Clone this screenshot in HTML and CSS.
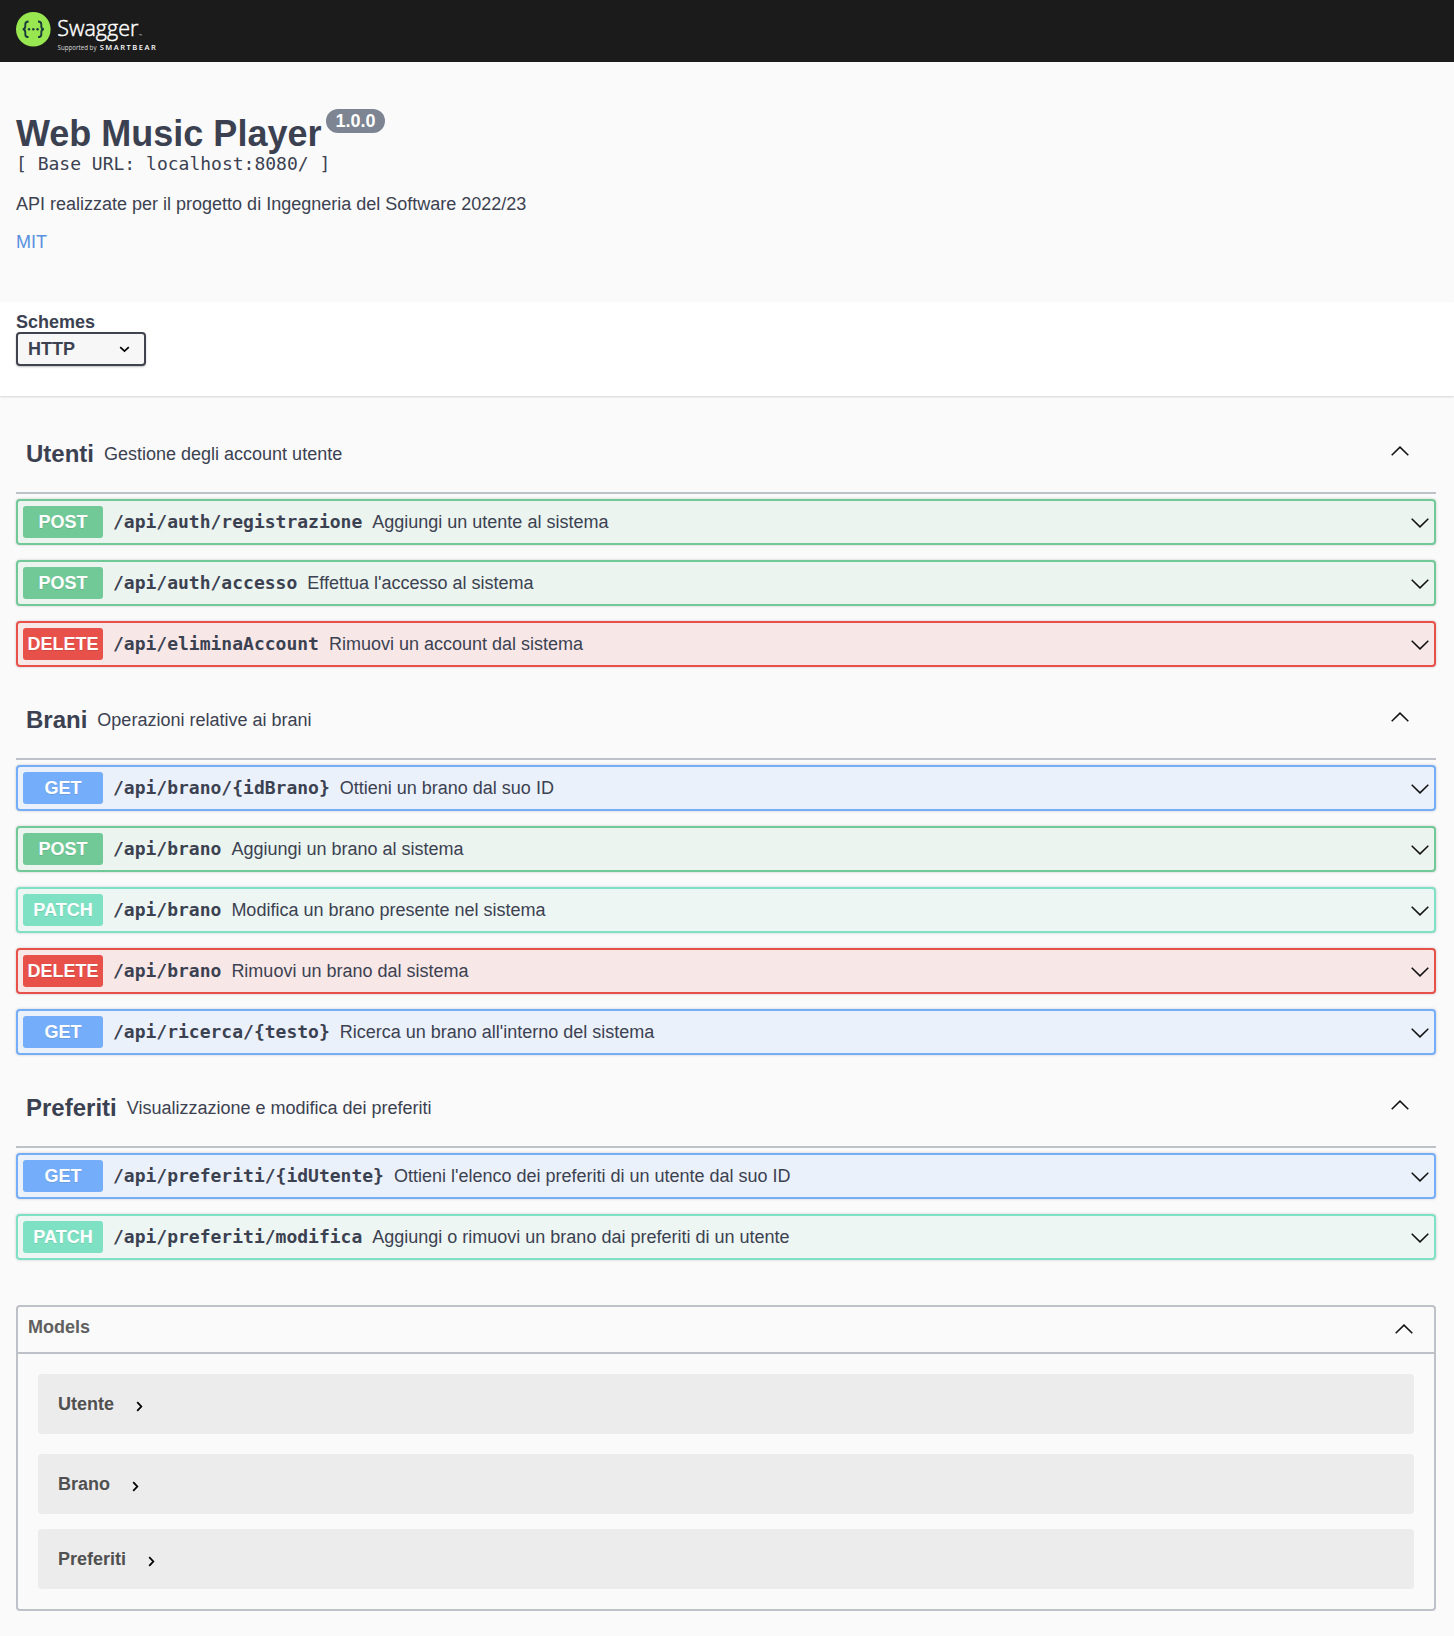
FILE: index.html
```html
<!DOCTYPE html>
<html lang="it">
<head>
<meta charset="utf-8">
<title>Swagger UI</title>
<link rel="stylesheet" href="styles.css">
</head>
<body>
<svg class="defs" aria-hidden="true">
  <symbol id="up" viewBox="0 0 18 10"><path d="M.7 9.2 9 1.1l8.300 8.100"/></symbol>
  <symbol id="down" viewBox="0 0 18 10"><path d="M.7.8 9 8.900 17.300.8"/></symbol>
  <symbol id="right" viewBox="0 0 7 11"><path d="M1.200 1.200 5.300 5.500 1.200 9.800"/></symbol>
</svg>
<header class="topbar">
  <svg class="logo" width="160" height="62" viewBox="0 0 160 62">
    <circle cx="33.300" cy="29.300" r="17.300" fill="#98e750"/>
    <g fill="none" stroke="#1c3a3c" stroke-width="1.900">
      <path d="M28.600 21.500c-2.600 0-3.300.8-3.300 2.700v2.100c0 2-.7 2.900-2.600 3 1.900.1 2.600 1 2.600 3v2.100c0 1.900.7 2.700 3.300 2.700"/>
      <path d="M38 21.500c2.600 0 3.300.8 3.300 2.700v2.100c0 2 .7 2.900 2.600 3-1.900.1-2.600 1-2.600 3v2.100c0 1.900-.7 2.700-3.300 2.700"/>
    </g>
    <g fill="#1c3a3c"><circle cx="29" cy="29.300" r="1.200"/><circle cx="33.300" cy="29.300" r="1.200"/><circle cx="37.600" cy="29.300" r="1.200"/></g>
    <text class="brand" x="57.300" y="36.300" textLength="81" lengthAdjust="spacingAndGlyphs">Swagger</text>
    <text class="tm" x="139" y="37">™</text>
    <text class="support" x="57.500" y="50.300" textLength="39" lengthAdjust="spacingAndGlyphs">Supported by</text>
    <text class="bear" x="99.700" y="50.300" textLength="56">SMARTBEAR</text>
  </svg>
</header>

<section class="info">
  <h1 class="title">Web Music Player<span class="version">1.0.0</span></h1>
  <p class="base-url">[ Base URL: localhost:8080/ ]</p>
  <p class="about">API realizzate per il progetto di Ingegneria del Software 2022/23</p>
  <a class="license">MIT</a>
</section>

<section class="schemes">
  <span class="schemes-label">Schemes</span>
  <div class="select">HTTP<svg class="select-arrow" viewBox="0 0 11 7"><path d="M1.200 1.200 5.500 5.200 9.800 1.200"/></svg></div>
</section>

<main class="content">
  <section class="tag">
    <header class="tag-head"><h2>Utenti</h2><p>Gestione degli account utente</p><svg class="arrow"><use href="#up"/></svg></header>
    <div class="op post"><span class="method">POST</span><code>/api/auth/registrazione</code><p>Aggiungi un utente al sistema</p><svg class="arrow"><use href="#down"/></svg></div>
    <div class="op post"><span class="method">POST</span><code>/api/auth/accesso</code><p>Effettua l'accesso al sistema</p><svg class="arrow"><use href="#down"/></svg></div>
    <div class="op delete"><span class="method">DELETE</span><code>/api/eliminaAccount</code><p>Rimuovi un account dal sistema</p><svg class="arrow"><use href="#down"/></svg></div>
  </section>
  <section class="tag">
    <header class="tag-head"><h2>Brani</h2><p>Operazioni relative ai brani</p><svg class="arrow"><use href="#up"/></svg></header>
    <div class="op get"><span class="method">GET</span><code>/api/brano/{idBrano}</code><p>Ottieni un brano dal suo ID</p><svg class="arrow"><use href="#down"/></svg></div>
    <div class="op post"><span class="method">POST</span><code>/api/brano</code><p>Aggiungi un brano al sistema</p><svg class="arrow"><use href="#down"/></svg></div>
    <div class="op patch"><span class="method">PATCH</span><code>/api/brano</code><p>Modifica un brano presente nel sistema</p><svg class="arrow"><use href="#down"/></svg></div>
    <div class="op delete"><span class="method">DELETE</span><code>/api/brano</code><p>Rimuovi un brano dal sistema</p><svg class="arrow"><use href="#down"/></svg></div>
    <div class="op get"><span class="method">GET</span><code>/api/ricerca/{testo}</code><p>Ricerca un brano all'interno del sistema</p><svg class="arrow"><use href="#down"/></svg></div>
  </section>
  <section class="tag">
    <header class="tag-head"><h2>Preferiti</h2><p>Visualizzazione e modifica dei preferiti</p><svg class="arrow"><use href="#up"/></svg></header>
    <div class="op get"><span class="method">GET</span><code>/api/preferiti/{idUtente}</code><p>Ottieni l'elenco dei preferiti di un utente dal suo ID</p><svg class="arrow"><use href="#down"/></svg></div>
    <div class="op patch"><span class="method">PATCH</span><code>/api/preferiti/modifica</code><p>Aggiungi o rimuovi un brano dai preferiti di un utente</p><svg class="arrow"><use href="#down"/></svg></div>
  </section>

  <section class="models">
    <header class="models-head"><h3>Models</h3><svg class="arrow"><use href="#up"/></svg></header>
    <div class="models-list">
      <div class="model">Utente<svg class="more"><use href="#right"/></svg></div>
      <div class="model">Brano<svg class="more"><use href="#right"/></svg></div>
      <div class="model">Preferiti<svg class="more"><use href="#right"/></svg></div>
    </div>
  </section>
</main>
</body>
</html>
```
FILE: styles.css
```css
* { box-sizing: border-box; }
body {
  margin: 0;
  min-height: 1636px;
  background: #fafafa;
  color: #3b4151;
  font: 18px/20px "Liberation Sans", Arial, sans-serif;
}
h1, h2, h3, p { margin: 0; }
svg { display: block; fill: none; }
.defs { display: none; }

.topbar { height: 62px; background: #1b1b1b; }
.brand { font: 300 22px "Open Sans", sans-serif; fill: #fff; stroke: #fff; stroke-width: .45px; }
.tm { font: 4px "Open Sans", sans-serif; fill: #ccc; }
.support { font: 6.5px "Open Sans", sans-serif; fill: #ddd; }
.bear { font: 600 7.500px "Open Sans", sans-serif; fill: #fff; }

.info { height: 240px; padding: 51px 16px 0; }
.title { display: flex; height: 41px; font-size: 36px; line-height: 41px; white-space: pre; }
.version {
  width: 59px;
  height: 24px;
  margin: -4px 0 0 5px;
  padding-right: 1px;
  border-radius: 12px;
  background: #7d8492;
  color: #fff;
  font-size: 18px;
  line-height: 24px;
  text-align: center;
}
.base-url { font: 18px/20px "DejaVu Sans Mono", monospace; }
.about { margin-top: 20px; }
.license { display: block; margin-top: 18px; color: #5890e0; }

.schemes {
  height: 94px;
  padding: 10px 16px 0;
  background: #fff;
  box-shadow: 0 1px 2px rgba(0, 0, 0, .15);
  font-weight: 700;
}
.schemes-label { display: block; }
.select {
  display: flex;
  align-items: center;
  justify-content: space-between;
  width: 130px;
  height: 34px;
  padding: 0 14px 1px 10px;
  border: 2px solid #41444e;
  border-radius: 4px;
  background: #f7f7f7;
  box-shadow: 0 1px 2px rgba(0, 0, 0, .25);
}
.select-arrow { width: 11px; height: 7px; margin-top: 1px; stroke: #000; stroke-width: 1.700; }

.content { padding: 20px 18px 0 16px; }
.arrow { flex: none; width: 18px; height: 10px; margin-left: auto; stroke: #111; stroke-width: 1.500; }
.tag { padding-bottom: 15px; }
.tag-head {
  display: flex;
  align-items: center;
  gap: 10px;
  height: 78px;
  margin-bottom: 5px;
  padding: 0 27px 0 10px;
  border-bottom: 2px solid #bfc1c8;
}
.tag-head h2 { font-size: 24px; line-height: 28px; }
.tag-head .arrow { margin-top: -6px; }
.op {
  display: flex;
  align-items: center;
  gap: 10px;
  height: 46px;
  margin-bottom: 15px;
  padding: 5px;
  border: 2px solid var(--tone);
  border-radius: 4px;
  background: var(--tint);
  box-shadow: 0 0 3px rgba(0, 0, 0, .19);
}
.op:last-child { margin-bottom: 0; }
.op code { font: 700 18px/20px "DejaVu Sans Mono", monospace; }
.op .arrow { margin-top: 2px; }
.method {
  width: 80px;
  height: 32px;
  border-radius: 3px;
  background: var(--tone);
  color: #fff;
  font-weight: 700;
  line-height: 32px;
  text-align: center;
  text-shadow: 0 1px 0 rgba(0, 0, 0, .1);
}
.post { --tone: #70c997; --tint: #ebf4ef; }
.get { --tone: #74adf9; --tint: #ebf1fa; }
.delete { --tone: #e8504a; --tint: #f8e7e7; }
.patch { --tone: #7fe1c4; --tint: #edf6f3; }

.models {
  margin-top: 30px;
  border: 2px solid #bfc1c8;
  border-radius: 4px;
}
.models-head {
  display: flex;
  align-items: center;
  height: 47px;
  padding: 0 21px 5px 10px;
  border-bottom: 2px solid #bfc1c8;
  color: #606060;
}
.models-head h3 { font-size: 18px; }
.models-head .arrow { margin-top: 3px; }
.models-list { padding: 20px; }
.model {
  display: flex;
  align-items: center;
  gap: 22px;
  height: 60px;
  margin-bottom: 15px;
  padding: 0 20px;
  border-radius: 4px;
  background: #ececec;
  color: #505050;
  font-weight: 700;
}
.model:first-child { margin-bottom: 20px; }
.model:last-child { margin-bottom: 0; }
.more { width: 7px; height: 11px; margin-top: 4px; stroke: #000; stroke-width: 1.800; }
```
